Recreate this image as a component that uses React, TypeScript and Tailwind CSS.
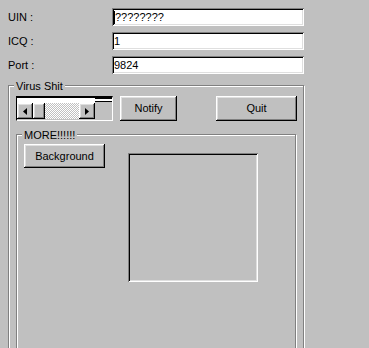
import React from 'react';

const raised =
  'shadow-[inset_-1px_-1px_#000,inset_1px_1px_#fff,inset_-2px_-2px_#808080,inset_2px_2px_#dfdfdf]';
const sunken =
  'shadow-[inset_1px_1px_#808080,inset_-1px_-1px_#fff,inset_2px_2px_#000,inset_-2px_-2px_#dfdfdf]';

function Field({ label, value, caret }: { label: string; value: string; caret?: boolean }) {
  return (
    <div className="flex items-center h-[18px]">
      <div className="w-[112px] pl-2 leading-[13px]">{label}</div>
      <div className={`w-[192px] h-[18px] bg-white ${sunken} flex items-center pl-[2px] leading-[13px]`}>
        {caret && <span className="inline-block w-px h-[13px] bg-black" />}
        <span>{value}</span>
      </div>
    </div>
  );
}

function Button({ label, w, h }: { label: string; w: string; h: string }) {
  return (
    <div className={`${w} ${h} ${raised} flex items-center justify-center leading-[13px]`}>{label}</div>
  );
}

function Group({ title, className, children }: { title: string; className: string; children: React.ReactNode }) {
  return (
    <div
      className={`relative border border-[#808080] shadow-[1px_1px_0_#fff,inset_1px_1px_0_#fff] ${className}`}
    >
      <div className="absolute -top-[6px] left-[5px] px-[2px] bg-[#c0c0c0] leading-[13px]">{title}</div>
      {children}
    </div>
  );
}

function ScrollBox() {
  return (
    <div className="w-[97px] h-[25px] flex border-t-2 border-t-black border-l border-l-black border-r border-r-white border-b border-b-white">
      <div className="w-[78px] flex flex-col">
        <div className="h-[5px] bg-white" />
        <div className="h-[16px] flex">
          <div className={`w-[16px] h-[16px] ${raised} flex items-center justify-center`}>
            <svg width="4" height="7" viewBox="0 0 4 7">
              <path d="M4 0 L0 3.5 L4 7 Z" fill="#000" />
            </svg>
          </div>
          <div className={`w-[12px] h-[16px] ${raised}`} />
          <div className="flex-1 h-[16px] bg-[image:repeating-conic-gradient(#c0c0c0_0_25%,#fff_0_50%)] bg-[length:2px_2px]" />
          <div className={`w-[16px] h-[16px] ${raised} flex items-center justify-center`}>
            <svg width="4" height="7" viewBox="0 0 4 7">
              <path d="M0 0 L4 3.5 L0 7 Z" fill="#000" />
            </svg>
          </div>
        </div>
      </div>
      <div className="flex-1">
        <div className="h-[4px] border-t border-b border-black bg-white" />
      </div>
    </div>
  );
}

export default function App() {
  return (
    <div
      className="w-[369px] h-[348px] overflow-hidden bg-[#c0c0c0] text-black text-[11px]"
      style={{ fontFamily: '"Liberation Sans", Arial, sans-serif' }}
    >
      <div className="pt-2 flex flex-col gap-[6px]">
        <Field label="UIN :" value="????????" caret />
        <Field label="ICQ :" value="1" />
        <Field label="Port :" value="9824" />
      </div>

      <Group title="Virus Shit" className="ml-2 mt-[11px] w-[296px] h-[300px] pl-[7px] pt-[10px]">
        <div className="flex items-start">
          <ScrollBox />
          <div className="ml-[7px]">
            <Button label="Notify" w="w-[57px]" h="h-[25px]" />
          </div>
          <div className="ml-[39px]">
            <Button label="Quit" w="w-[81px]" h="h-[25px]" />
          </div>
        </div>

        <Group title="MORE!!!!!!" className="mt-[13px] w-[280px] h-[260px] pl-[7px] pt-[9px]">
          <div className="flex items-start">
            <Button label="Background" w="w-[81px]" h="h-[24px]" />
            <div
              className={`ml-[23px] mt-[9px] w-[130px] h-[129px] ${sunken}`}
            />
          </div>
        </Group>
      </Group>
    </div>
  );
}
